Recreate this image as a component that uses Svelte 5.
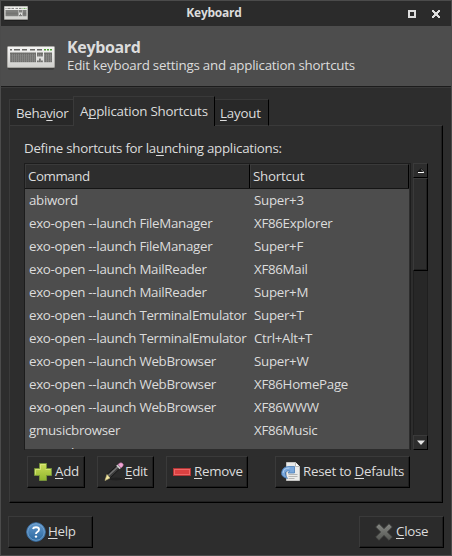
<script>
  const rows = [
    ['abiword', 'Super+3'],
    ['exo-open --launch FileManager', 'XF86Explorer'],
    ['exo-open --launch FileManager', 'Super+F'],
    ['exo-open --launch MailReader', 'XF86Mail'],
    ['exo-open --launch MailReader', 'Super+M'],
    ['exo-open --launch TerminalEmulator', 'Super+T'],
    ['exo-open --launch TerminalEmulator', 'Ctrl+Alt+T'],
    ['exo-open --launch WebBrowser', 'Super+W'],
    ['exo-open --launch WebBrowser', 'XF86HomePage'],
    ['exo-open --launch WebBrowser', 'XF86WWW'],
    ['gmusicbrowser', 'XF86Music'],
    ['gmusicbrowser', '']
  ];
</script>

{#snippet keyboard(w, h)}
  <svg width={w} height={h} viewBox="0 0 48 25" preserveAspectRatio="none">
    <defs>
      <linearGradient id="kb" x1="0" y1="0" x2="0" y2="1">
        <stop offset="0" stop-color="#f6f6f5" /><stop offset="1" stop-color="#cfcfcc" />
      </linearGradient>
      <pattern id="keys" width="2" height="2" patternUnits="userSpaceOnUse">
        <rect width="2" height="2" fill="#858583" /><rect width="1" height="1" fill="#626260" />
      </pattern>
    </defs>
    <rect x="1" y="22" width="46" height="2.5" rx="1" fill="#000" opacity=".35" />
    <rect x=".5" y=".5" width="47" height="22" rx="1" fill="url(#kb)" stroke="#aaa9a5" />
    <path d="M3 4h2M7 4h6M15 4h5M23 4h5M30 4h5" stroke="#666663" stroke-width="1.5" />
    <path d="M37 4h2M40 4h2M43 4h2" stroke="#4e9a36" stroke-width="1.5" />
    <path d="M3 7h26v10H3zM30 7h6v4h-6zM37 7h8v10h-8zM32 13h2v2h2v2h-6v-2h2z" fill="url(#keys)" />
    <path d="M3 7.5h26M30 7.5h6M37 7.5h8" stroke="#666664" />
  </svg>
{/snippet}

<div class="window">
  <header class="titlebar">
    <span class="mini">{@render keyboard(24, 15)}</span>
    <span class="title">Keyboard</span>
    <svg class="controls" width="32" height="8" shape-rendering="crispEdges">
      <rect x="1" y="1" width="6" height="6" fill="none" stroke="#dedede" stroke-width="2" />
      <path d="M24 0h2v1h1v1h2v-1h1v-1h2v2h-1v1h-1v2h1v1h1v2h-2v-1h-1v-1h-2v1h-1v1h-2v-2h1v-1h1v-2h-1v-1h-1z" fill="#dedede" />
    </svg>
  </header>
  <section class="banner">
    {@render keyboard(48, 24)}
    <div>
      <h1>Keyboard</h1>
      <p>Edit keyboard settings and application shortcuts</p>
    </div>
  </section>

  <main>
    <nav>
      <div class="tab first">Beha<u>v</u>ior</div>
      <div class="tab active">A<u>p</u>plication Shortcuts</div>
      <div class="tab last"><u>L</u>ayout</div>
    </nav>
    <section class="panel">
      <div class="label">Define shortcuts for la<u>u</u>nching applications:</div>
      <div class="scroller">
        <div class="table">
          <div class="head"><span>Command</span><span>Shortcut</span></div>
          <div class="rows">
            {#each rows as [cmd, key]}
              <div class="row"><span>{cmd}</span><span>{key}</span></div>
            {/each}
          </div>
        </div>
        <div class="scrollbar">
          <div class="arrow">
            <svg width="8" height="6"><path d="M0 4L4 0L8 4z" fill="#151515" /><path d="M1 4.5h6" stroke="#fff" /><path d="M4 1.5L7 4" stroke="#777" /></svg>
          </div>
          <div class="thumb"></div>
          <div class="trough"></div>
          <div class="arrow">
            <svg width="8" height="6"><path d="M0 .5h8L4 5z" fill="#e4e4e4" /></svg>
          </div>
        </div>
      </div>
      <div class="actions">
        <button class="add">
          <svg width="18" height="18">
            <defs><linearGradient id="green" x1="0" y1="0" x2="0" y2="1"><stop stop-color="#cfe05a" /><stop offset="1" stop-color="#8fb62e" /></linearGradient></defs>
            <path d="M5.5.5h7v5h5v7h-5v5h-7v-5h-5v-7h5z" fill="url(#green)" stroke="#76923a" />
            <path d="M6.5 6.5v-5h5M1.5 11.5v-5h5M11.5 6.5h5" fill="none" stroke="#e6ee91" opacity=".6" />
          </svg>
          <span><u>A</u>dd</span>
        </button>
        <button class="edit">
          <svg width="20" height="20" viewBox="0 0 20 20">
            <ellipse cx="12" cy="17" rx="7" ry="1.5" fill="#181818" opacity=".5" />
            <path d="M3 12.5L14 2.5l3 3L6 16z" fill="#3c3c3c" stroke="#111" stroke-width=".8" />
            <path d="M4.5 13.5L15 3.8" stroke="#777" stroke-width="1.2" />
            <path d="M3 12.5L1 18.5l5-2.5z" fill="#f4e9a6" stroke="#c9be7c" stroke-width=".6" />
            <path d="M12.8 3.2l3.5 3.5" stroke="#ccc" stroke-width="1.8" />
            <path d="M14 2.5Q16 0 18 1t1 3l-2 2z" fill="#efa3d4" stroke="#b06c98" stroke-width=".6" />
          </svg>
          <span><u>E</u>dit</span>
        </button>
        <button class="remove">
          <svg width="18" height="8">
            <rect x=".5" y=".5" width="17" height="7" fill="#dc4141" stroke="#b23535" />
            <rect x="1.5" y="1.5" width="15" height="5" fill="none" stroke="#e66" />
          </svg>
          <span><u>R</u>emove</span>
        </button>
        <button class="reset">
          <svg width="20" height="20" viewBox="0 0 20 20">
            <path d="M5.5.5h9l4 4v14h-13z" fill="#ebebea" stroke="#c4c4c2" />
            <path d="M14.5.5v4h4" fill="#fff" stroke="#b9b9b7" />
            <path d="M7.5 12.5h9M7.5 14.5h9M7.5 16.5h6" stroke="#b5b5b4" />
            <path d="M6.5 16.5Q0 15 .6 10.5Q1.5 4.5 8 4.5H13.5V11H7L8.8 8.8Q4.5 8.5 4.5 11.5Q4.5 14 6.5 16.5z" fill="#79a7dc" stroke="#4a7db8" stroke-width=".8" />
            <path d="M2.2 11Q2 6 8.5 6" fill="none" stroke="#b2d0ef" />
          </svg>
          <span>Reset to <u>D</u>efaults</span>
        </button>
      </div>
    </section>
    <footer>
      <button class="help">
        <svg width="20" height="20">
          <defs><linearGradient id="blue" x1="0" y1="0" x2="0" y2="1"><stop stop-color="#6599cc" /><stop offset="1" stop-color="#2a689f" /></linearGradient></defs>
          <circle cx="10" cy="10" r="9.3" fill="url(#blue)" stroke="#3d73a8" />
          <circle cx="10" cy="10" r="8.3" fill="none" stroke="#82aed7" opacity=".7" />
          <path d="M7 7Q7.5 5.2 10 5.2Q13 5.2 13 7.5Q13 9 11.3 10Q10 10.8 10 12" fill="none" stroke="#fff" stroke-width="1.9" />
          <circle cx="10" cy="14.6" r="1.2" fill="#fff" />
        </svg>
        <span><u>H</u>elp</span>
      </button>
      <button class="close">
        <svg width="18" height="18">
          <defs><linearGradient id="grey" x1="0" y1="0" x2="0" y2="1"><stop stop-color="#858783" /><stop offset="1" stop-color="#555753" /></linearGradient></defs>
          <path d="M4 .8L9 5.7L14 .8L17.2 4L12.2 9L17.2 14L14 17.2L9 12.3L4 17.2L.8 14L5.8 9L.8 4z" fill="url(#grey)" stroke="#4a4b49" />
        </svg>
        <span><u>C</u>lose</span>
      </button>
    </footer>
  </main>
</div>

<style>
  :global(body) { margin: 0; background: #2d2d2d; }
  * { box-sizing: border-box; }
  .window {
    width: 452px; height: 556px; display: flex; flex-direction: column;
    border: 1px solid #4b4b4b; background: #2d2d2d; color: #dcdcdc; overflow: hidden;
    font: 13.33px/18px "Open Sans", "Noto Sans", sans-serif; letter-spacing: -.22px;
  }
  u { text-decoration: underline; text-decoration-thickness: 1px; text-underline-offset: 2px; text-decoration-skip-ink: none; }
  svg { display: block; flex: none; }
  .titlebar { height: 25px; flex: none; display: flex; align-items: center; background: #2b2b2b; padding: 0 11px 0 3px; }
  .mini { width: 56px; margin-bottom: 1px; }
  .title { flex: 1; text-align: center; font-weight: 700; font-size: 12px; padding-right: 40px; margin-bottom: 1px; }
  .banner { height: 60px; flex: none; display: flex; align-items: center; gap: 12px; padding-left: 6px; background: #4d4d4d; }
  .banner svg { margin-top: 4px; }
  .banner div { height: 41px; margin-top: 1px; }
  h1 { font-size: 16px; line-height: 22px; margin: 0; font-weight: 700; letter-spacing: -.35px; }
  p { margin: 0; line-height: 15px; }
  main { flex: 1; border-top: 1px solid #1c1c1c; padding: 9px 6px 6px 8px; display: flex; flex-direction: column; box-shadow: inset 0 1px #393939; }
  nav { display: flex; align-items: flex-end; height: 30px; position: relative; z-index: 1; }
  .tab { height: 27px; border: 1px solid #1f1f1f; border-top-color: #393939; background: #282828; padding: 4px 0 0 6px; white-space: nowrap; border-bottom: 1px solid #3a3a3a; }
  .first { width: 64px; border-left-color: #393939; border-right: 0; letter-spacing: -.35px; }
  .active { width: 142px; height: 30px; background: #2d2d2d; border-left-color: #3a3a3a; border-right-color: #000; border-bottom: 0; padding-top: 5px; }
  .last { width: 54px; padding-left: 5px; border-left: 0; border-right-color: #000; }
  .panel { height: 378px; margin-top: -1px; width: 434px; border: 1px solid #3a3a3a; border-right-color: #000; border-bottom-color: #000; padding: 13px 0 0 14px; box-shadow: inset -1px -1px #202020; }
  .label { height: 24px; letter-spacing: -.27px; }
  .scroller { display: flex; gap: 2px; height: 287px; }
  .table { width: 387px; border: 1px solid #1d1d1d; border-bottom: 0; padding: 0 1px 1px 0; display: flex; flex-direction: column; }
  .head { display: flex; height: 25px; flex: none; border-bottom: 1px solid #151515; }
  .head span { border: 1px solid #3a3a3a; border-bottom: 0; border-right-color: #000; padding: 2px 0 0 2px; width: 225px; }
  .head span:first-child { letter-spacing: -.45px; }
  .head span + span { width: 159px; }
  .rows { flex: 1; overflow: hidden; background: #4d4d4d; width: 384px; }
  .row { height: 23px; display: flex; line-height: 23px; padding-left: 4px; white-space: pre; letter-spacing: -.3px; }
  .row span:first-child { width: 225px; }
  .scrollbar { width: 15px; height: 287px; display: flex; flex-direction: column; background: #272727; }
  .arrow, .thumb { border: 1px solid #3a3a3a; border-right-color: #000; border-bottom-color: #000; background: #2d2d2d; }
  .arrow { height: 15px; display: flex; align-items: center; justify-content: center; }
  .thumb { height: 93px; box-shadow: inset -1px -1px #202020; }
  .trough { flex: 1; border: solid #1f1f1f; border-width: 0 1px; }
  .actions { display: flex; padding: 6px 0 0 3px; }
  button { appearance: none; font: inherit; letter-spacing: -.27px; color: inherit; height: 32px; display: flex; align-items: center; padding: 0 0 1px; gap: 3px; border: 1px solid #3a3a3a; border-right-color: #000; border-bottom-color: #000; background: #2b2b2b; box-shadow: inset -1px -1px #1e1e1e; white-space: nowrap; }
  button span { margin-bottom: 2px; }
  .add { width: 58px; padding-left: 6px; }
  .edit { width: 57px; margin-left: 12px; padding-left: 6px; gap: 1px; }
  .remove { width: 82px; margin-left: 12px; padding-left: 6px; }
  .reset { width: 135px; margin-left: 27px; padding-left: 5px; gap: 2px; }
  footer { display: flex; justify-content: space-between; margin: 13px 1px 0 -1px; }
  .help { width: 85px; padding-left: 17px; gap: 2px; }
  .close { width: 85px; padding-left: 15px; }
</style>
